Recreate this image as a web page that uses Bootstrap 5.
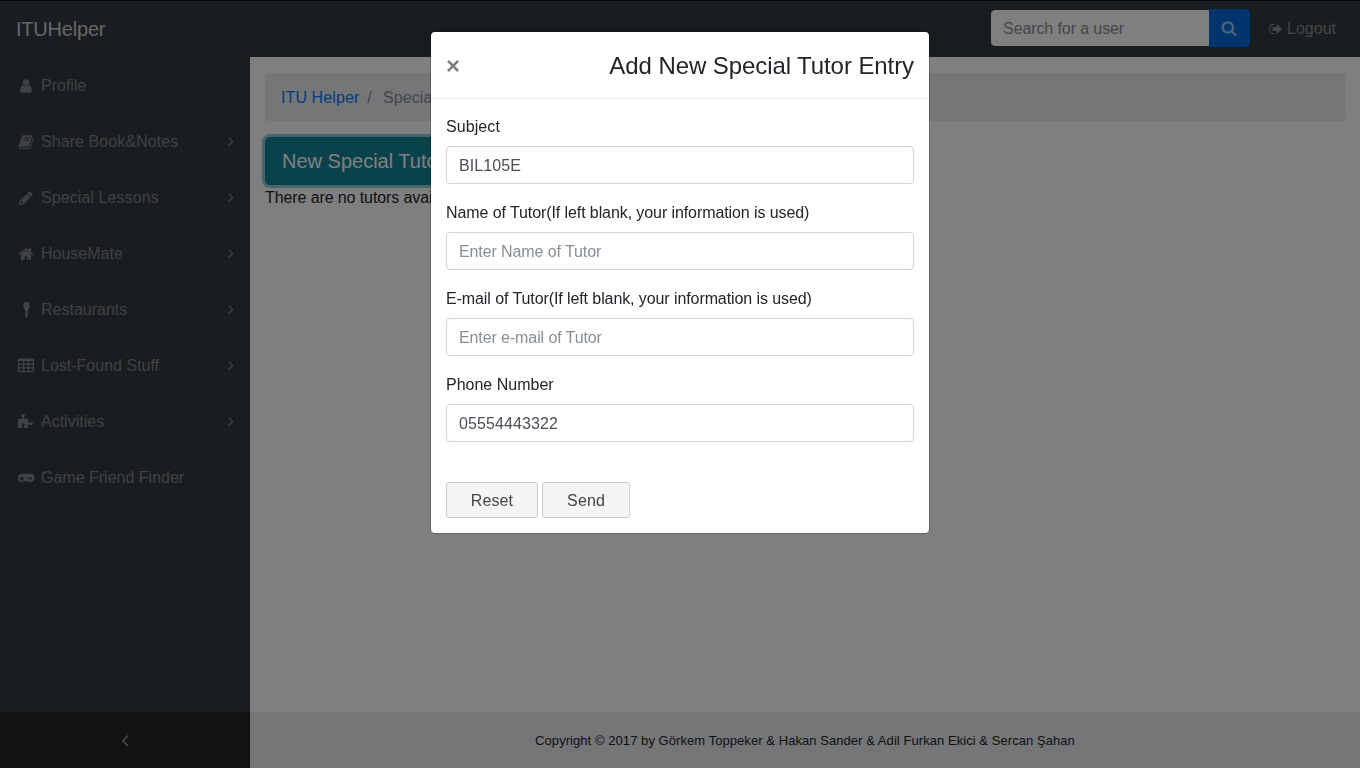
<!DOCTYPE html>
<html lang="en">
<head>
    <title>Special Tutor</title>
    <meta charset="utf-8">
    <meta name="viewport" content="width=device-width, initial-scale=1">
    <link href="https://cdn.jsdelivr.net/npm/bootstrap@5.3.3/dist/css/bootstrap.min.css" rel="stylesheet">
    <style>
        body { font-family: "Liberation Sans", Arial, sans-serif; font-size: 16px; color: #212529; height: 100vh; overflow: hidden; }
        .top-bar { background: #343a40; height: 57px; padding: 0 16px; border-top: 1px solid #111; flex-wrap: nowrap; }
        .top-bar .navbar-brand { font-size: 20px; letter-spacing: -.2px; color: rgba(255,255,255,.75); padding: 0; margin: 0; }
        .search-box { width: 259px; margin-right: 11px; margin-top: -2px; }
        .search-box .form-control { flex: 0 0 218px; width: 218px; background: #fff; border: 1px solid #fff; height: 36px; padding: 7px 11px 5px; font-size: 16px; letter-spacing: -.1px; border-radius: 4px 0 0 4px; }
        .search-box .form-control::placeholder { color: #868e96; opacity: 1; }
        .search-box .search-btn { flex: none; width: 42px; height: 38px; margin-left: 0; padding: 0; background: #0069d9; border: 1px solid #0069d9; border-radius: 0 4px 4px 0; display: flex; align-items: center; justify-content: center; }
        .search-btn svg { width: 16px; height: 16px; fill: #9cc8ef; }
        .logout-link { color: rgba(255,255,255,.42); text-decoration: none; padding: 0 8px; display: flex; align-items: center; gap: 4px; }
        .logout-link svg { width: 14px; height: 16px; fill: currentColor; }
        .page-row { height: 711px; }
        .side-col { width: 250px; flex: 0 0 250px; background: #343a40; }
        .side-link { height: 56px; padding: 2px 11px 0 18px; color: rgba(255,255,255,.38); text-decoration: none; display: flex; align-items: center; gap: 7px; }
        .side-link svg.ico { width: 16px; height: 16px; fill: currentColor; flex: none; }
        .side-link svg.arrow { width: 16px; height: 16px; fill: currentColor; flex: none; margin-left: auto; margin-top: -2px; }
        .wider-text { letter-spacing: .08px; }
        .side-toggle { height: 56px; background: #212529; display: flex; align-items: center; justify-content: center; color: rgba(255,255,255,.5); }
        .side-toggle svg { width: 20px; height: 20px; fill: currentColor; }
        .main-col { background: #fff; min-width: 0; }
        .main-inner { padding: 16px 15px; }
        .crumbs { background: #e9ecef; padding: 13px 16px 11px; border-radius: 4px; margin-bottom: 16px; height: 48px; flex-wrap: nowrap; letter-spacing: .1px; }
        .crumbs a { color: #007bff; text-decoration: none; }
        .crumbs .breadcrumb-item.active { color: #868e96; }
        .crumbs .breadcrumb-item + .breadcrumb-item::before { color: #868e96; padding-right: 11px; }
        .tutor-btn { background: #138496; border: 1px solid #117a8b; color: #fff; font-size: 20px; padding: 8px 16px; line-height: 30px; border-radius: 4.8px; box-shadow: 0 0 0 3px rgba(23,162,184,.5); white-space: nowrap; display: block; }
        .no-tutors { margin-top: 1px; letter-spacing: -.1px; }
        .foot-bar { height: 56px; padding-top: 2px; background: #e9ecef; font-size: 13px; letter-spacing: .06px; color: #212529; display: flex; align-items: center; justify-content: center; }
        .tutor-dialog { max-width: 500px; margin: 31px auto 0; }
        .tutor-dialog .modal-content { border: 1px solid rgba(0,0,0,.2); border-radius: 4.8px; }
        .tutor-dialog .modal-header { padding: 16px 15px 14px; border-bottom: 1px solid #e9ecef; height: 67px; }
        .tutor-dialog .modal-title { font-size: 24px; line-height: 36px; font-weight: 500; letter-spacing: -.08px; color: #212529; }
        .close-x { background: none; border: 0; padding: 0; margin: 0; font-size: 24px; line-height: 1; font-weight: 700; color: #000; opacity: .5; }
        .tutor-dialog .modal-body { padding: 15px; }
        .field-wrap { margin-bottom: 16px; }
        .field-wrap label { padding-top: 1px; margin-bottom: 7px; line-height: 24px; display: block; color: #212529; }
        .tight-label { letter-spacing: -.09px; }
        .field-wrap .form-control { height: 38px; padding: 7px 12px 5px; border: 1px solid #ced4da; border-radius: 4px; font-size: 16px; letter-spacing: .1px; color: #495057; }
        .field-wrap .form-control::placeholder { color: #868e96; opacity: 1; letter-spacing: -.1px; }
        .form-btns { margin-top: 40px; gap: 4px; }
        .plain-btn { height: 36px; width: 88px; background: #f5f5f5; border: 1px solid #ccc; border-radius: 3px; color: #444; font-size: 16px; letter-spacing: .1px; padding: 2px 0 0; line-height: 32px; }
        .plain-btn.reset-btn { width: 92px; }
    </style>
</head>
<body class="d-flex flex-column">
    <nav class="navbar top-bar d-flex align-items-center justify-content-between">
        <a class="navbar-brand" href="#">ITUHelper</a>
        <div class="d-flex align-items-center">
            <form class="input-group search-box align-items-center flex-nowrap">
                <input type="text" class="form-control" placeholder="Search for a user">
                <button type="button" class="search-btn">
                    <svg viewBox="0 0 1792 1792"><path d="M1216 832q0-185-131.500-316.500t-316.500-131.500-316.500 131.500-131.500 316.500 131.500 316.500 316.500 131.500 316.500-131.500 131.500-316.500zm512 832q0 52-38 90t-90 38q-54 0-90-38l-343-342q-179 124-399 124-143 0-273.500-55.500t-225-150-150-225-55.500-273.500 55.500-273.500 150-225 225-150 273.500-55.500 273.500 55.500 225 150 150 225 55.500 273.500q0 220-124 399l343 343q37 37 37 90z"/></svg>
                </button>
            </form>
            <a class="logout-link" href="#">
                <svg viewBox="0 0 1792 1792"><path d="M704 1440q0 4 1 20t.5 26.500-3 23.500-10 19.500-20.500 6.500h-320q-119 0-203.500-84.500t-84.500-203.500v-704q0-119 84.500-203.500t203.500-84.500h320q13 0 22.500 9.500t9.500 22.500q0 4 1 20t.5 26.500-3 23.500-10 19.500-20.500 6.500h-320q-66 0-113 47t-47 113v704q0 66 47 113t113 47h312l11.500 1 11.500 3 8 5.500 7 9 2 13.500zm928-544q0 26-19 45l-544 544q-19 19-45 19t-45-19-19-45v-288h-448q-26 0-45-19t-19-45v-384q0-26 19-45t45-19h448v-288q0-26 19-45t45-19 45 19l544 544q19 19 19 45z"/></svg>
                Logout
            </a>
        </div>
    </nav>

    <div class="d-flex page-row">
        <aside class="side-col d-flex flex-column">
            <a class="side-link" href="#">
                <svg class="ico" viewBox="0 0 1792 1792"><path d="M1536 1399q0 109-62.500 187t-150.500 78h-854q-88 0-150.500-78t-62.500-187q0-85 8.500-160.500t31.500-152 58.500-131 94-89 134.500-34.500q131 128 313 128t313-128q76 0 134.500 34.500t94 89 58.500 131 31.500 152 8.500 160.500zm-256-887q0 159-112.500 271.500t-271.500 112.500-271.500-112.500-112.500-271.500 112.500-271.500 271.500-112.500 271.500 112.500 112.500 271.500z"/></svg>
                Profile
            </a>
            <a class="side-link" href="#">
                <svg class="ico" viewBox="0 0 1792 1792"><path d="M1703 478q40 57 18 129l-275 906q-19 64-76.500 107.500t-122.500 43.500h-923q-77 0-148.500-53.500t-99.500-131.500q-24-67-2-127 0-4 3-27t4-37q1-8-3-21.500t-3-19.500q2-11 8-21t16.500-23.500 16.500-23.500q23-38 45-91.500t30-91.500q3-10 .5-30t-.5-28q3-11 17-28t17-23q21-36 42-92t25-90q1-9-2.500-32t.5-28q4-13 22-30.500t22-22.500q19-26 42.500-84.500t27.500-96.500q1-8-3-25.500t-2-26.500q2-8 9-18t18-23 17-21q8-12 16.500-30.500t15-35 16-36 19.500-32 26.500-23.500 36-11.500 47.500 5.500l-1 3q38-9 51-9h761q74 0 114 56t18 130l-274 906q-36 119-71.500 153.500t-128.500 34.500h-869q-27 0-38 15-11 16-1 43 24 70 144 70h923q29 0 56-15.500t35-41.500l300-987q7-22 5-57 38 15 59 43zm-1064 2q-4 13 2 22.500t20 9.500h608q13 0 25.500-9.500t16.500-22.500l21-64q4-13-2-22.500t-20-9.500h-608q-13 0-25.500 9.500t-16.500 22.500zm-83 256q-4 13 2 22.500t20 9.500h608q13 0 25.500-9.500t16.500-22.500l21-64q4-13-2-22.500t-20-9.500h-608q-13 0-25.500 9.500t-16.500 22.500z"/></svg>
                <span class="wider-text">Share Book&amp;Notes</span>
                <svg class="arrow" viewBox="0 0 1792 1792"><path d="M1171 960q0 13-10 23l-466 466q-10 10-23 10t-23-10l-50-50q-10-10-10-23t10-23l393-393-393-393q-10-10-10-23t10-23l50-50q10-10 23-10t23 10l466 466q10 10 10 23z"/></svg>
            </a>
            <a class="side-link" href="#">
                <svg class="ico" viewBox="0 0 1792 1792"><path d="M491 1536l91-91-235-235-91 91v107h128v128h107zm523-928q0-22-22-22-10 0-17 7l-542 542q-7 7-7 17 0 22 22 22 10 0 17-7l542-542q7-7 7-17zm-54-192l416 416-832 832h-416v-416zm683 96q0 53-37 90l-166 166-416-416 166-165q36-38 90-38 53 0 91 38l235 234q37 39 37 91z"/></svg>
                <span class="wider-text">Special Lessons</span>
                <svg class="arrow" viewBox="0 0 1792 1792"><path d="M1171 960q0 13-10 23l-466 466q-10 10-23 10t-23-10l-50-50q-10-10-10-23t10-23l393-393-393-393q-10-10-10-23t10-23l50-50q10-10 23-10t23 10l466 466q10 10 10 23z"/></svg>
            </a>
            <a class="side-link" href="#">
                <svg class="ico" viewBox="0 0 1792 1792"><path d="M1472 992v480q0 26-19 45t-45 19h-384v-384h-256v384h-384q-26 0-45-19t-19-45v-480q0-1 .5-3t.5-3l575-474 575 474q1 2 1 6zm223-69l-62 74q-8 9-21 11h-3q-13 0-21-7l-692-577-692 577q-12 8-24 7-13-2-21-11l-62-74q-8-10-7-23.500t11-21.500l719-599q32-26 76-26t76 26l244 204v-195q0-14 9-23t23-9h192q14 0 23 9t9 23v408l219 182q10 8 11 21.500t-7 23.500z"/></svg>
                HouseMate
                <svg class="arrow" viewBox="0 0 1792 1792"><path d="M1171 960q0 13-10 23l-466 466q-10 10-23 10t-23-10l-50-50q-10-10-10-23t10-23l393-393-393-393q-10-10-10-23t10-23l50-50q10-10 23-10t23 10l466 466q10 10 10 23z"/></svg>
            </a>
            <a class="side-link" href="#">
                <svg class="ico" viewBox="0 0 16 16"><ellipse cx="8.500" cy="3.800" rx="3.300" ry="4"/><rect x="7.300" y="6" width="2.400" height="9.500" rx="1.200"/></svg>
                Restaurants
                <svg class="arrow" viewBox="0 0 1792 1792"><path d="M1171 960q0 13-10 23l-466 466q-10 10-23 10t-23-10l-50-50q-10-10-10-23t10-23l393-393-393-393q-10-10-10-23t10-23l50-50q10-10 23-10t23 10l466 466q10 10 10 23z"/></svg>
            </a>
            <a class="side-link" href="#">
                <svg class="ico" viewBox="64 64 1664 1664"><path d="M576 1376v-192q0-14-9-23t-23-9h-320q-14 0-23 9t-9 23v192q0 14 9 23t23 9h320q14 0 23-9t9-23zm0-384v-192q0-14-9-23t-23-9h-320q-14 0-23 9t-9 23v192q0 14 9 23t23 9h320q14 0 23-9t9-23zm512 384v-192q0-14-9-23t-23-9h-320q-14 0-23 9t-9 23v192q0 14 9 23t23 9h320q14 0 23-9t9-23zm-512-768v-192q0-14-9-23t-23-9h-320q-14 0-23 9t-9 23v192q0 14 9 23t23 9h320q14 0 23-9t9-23zm512 384v-192q0-14-9-23t-23-9h-320q-14 0-23 9t-9 23v192q0 14 9 23t23 9h320q14 0 23-9t9-23zm512 384v-192q0-14-9-23t-23-9h-320q-14 0-23 9t-9 23v192q0 14 9 23t23 9h320q14 0 23-9t9-23zm-512-768v-192q0-14-9-23t-23-9h-320q-14 0-23 9t-9 23v192q0 14 9 23t23 9h320q14 0 23-9t9-23zm512 384v-192q0-14-9-23t-23-9h-320q-14 0-23 9t-9 23v192q0 14 9 23t23 9h320q14 0 23-9t9-23zm0-384v-192q0-14-9-23t-23-9h-320q-14 0-23 9t-9 23v192q0 14 9 23t23 9h320q14 0 23-9t9-23zm128-320v1088q0 66-47 113t-113 47h-1344q-66 0-113-47t-47-113v-1088q0-66 47-113t113-47h1344q66 0 113 47t47 113z"/></svg>
                Lost-Found Stuff
                <svg class="arrow" viewBox="0 0 1792 1792"><path d="M1171 960q0 13-10 23l-466 466q-10 10-23 10t-23-10l-50-50q-10-10-10-23t10-23l393-393-393-393q-10-10-10-23t10-23l50-50q10-10 23-10t23 10l466 466q10 10 10 23z"/></svg>
            </a>
            <a class="side-link" href="#">
                <svg class="ico" viewBox="0 0 1792 1792"><path d="M1664 1098q0 81-44.500 135t-123.500 54q-41 0-77.500-17.500t-59-38-56.500-38-71-17.500q-110 0-110 124 0 39 16 115t15 115v5q-22 0-33 1-34 3-97.500 11.500t-115.500 13.500-98 5q-61 0-103-26.500t-42-83.500q0-37 17.500-71t38-56.500 38-59 17.500-77.500q0-79-54-123.500t-135-44.500q-84 0-143 45.500t-59 127.500q0 43 15 83t33.500 64.500 33.500 53 15 50.500q0 45-46 89-37 35-117 35-95 0-245-24-9-2-27.500-4t-27.500-4l-13-2q-1 0-3-1-2 0-2-1v-1024q2 1 17.500 3.500t34 5 21.500 3.500q150 24 245 24 80 0 117-35 46-44 46-89 0-22-15-50.500t-33.500-53-33.500-64.500-15-83q0-82 59-127.500t144-45.500q80 0 134 44.500t54 123.500q0 41-17.500 77.500t-38 59-38 56.500-17.500 71q0 57 42 83.500t103 26.500q64 0 180-15t163-17v2q-1 2-3.500 17.500t-5 34-3.500 21.500q-24 150-24 245 0 80 35 117 44 46 89 46 22 0 50.500-15t53-33.500 64.500-33.500 83-15q82 0 127.500 59t45.500 143z"/></svg>
                Activities
                <svg class="arrow" viewBox="0 0 1792 1792"><path d="M1171 960q0 13-10 23l-466 466q-10 10-23 10t-23-10l-50-50q-10-10-10-23t10-23l393-393-393-393q-10-10-10-23t10-23l50-50q10-10 23-10t23 10l466 466q10 10 10 23z"/></svg>
            </a>
            <a class="side-link" href="#">
                <svg class="ico" viewBox="0 0 16 16" style="overflow:visible"><path fill-rule="evenodd" d="M4 3.800h8.500a4.200 4.200 0 0 1 0 8.400c-1.800 0-2.500-1.300-4.200-1.300s-2.500 1.300-4.300 1.300a4.200 4.200 0 0 1 0-8.400zM3.200 6.800v1.200h-1.200v1.500h1.200v1.200h1.500v-1.200h1.200v-1.500h-1.200v-1.200zM11.500 8a1 1 0 1 0 0 .1zM14 8.500a1 1 0 1 0 0 .1z"/></svg>
                Game Friend Finder
            </a>
            <div class="side-toggle mt-auto">
                <svg viewBox="0 0 1792 1792"><path d="M1203 544q0 13-10 23l-393 393 393 393q10 10 10 23t-10 23l-50 50q-10 10-23 10t-23-10l-466-466q-10-10-10-23t10-23l466-466q10-10 23-10t23 10l50 50q10 10 10 23z"/></svg>
            </div>
        </aside>

        <main class="main-col flex-grow-1 d-flex flex-column">
            <div class="main-inner flex-grow-1">
                <ol class="breadcrumb crumbs">
                    <li class="breadcrumb-item"><a href="#">ITU Helper</a></li>
                    <li class="breadcrumb-item active">Special Tutor</li>
                </ol>
                <button type="button" class="btn tutor-btn">New Special Tutor Entry</button>
                <div class="no-tutors">There are no tutors available</div>
            </div>
            <footer class="foot-bar">Copyright © 2017 by Görkem Toppeker &amp; Hakan Sander &amp; Adil Furkan Ekici &amp; Sercan Şahan</footer>
        </main>
    </div>

    <div class="modal-backdrop fade show"></div>
    <div class="modal fade show d-block" tabindex="-1">
        <div class="modal-dialog tutor-dialog">
            <div class="modal-content">
                <div class="modal-header justify-content-between">
                    <button type="button" class="close-x">×</button>
                    <h4 class="modal-title">Add New Special Tutor Entry</h4>
                </div>
                <div class="modal-body">
                    <form>
                        <div class="field-wrap">
                            <label for="subject" class="wider-text">Subject</label>
                            <input type="text" class="form-control" id="subject" value="BIL105E">
                        </div>
                        <div class="field-wrap">
                            <label for="tutor" class="tight-label">Name of Tutor(If left blank, your information is used)</label>
                            <input type="text" class="form-control" id="tutor" placeholder="Enter Name of Tutor">
                        </div>
                        <div class="field-wrap">
                            <label for="mail" class="tight-label">E-mail of Tutor(If left blank, your information is used)</label>
                            <input type="email" class="form-control" id="mail" placeholder="Enter e-mail of Tutor">
                        </div>
                        <div class="field-wrap mb-0">
                            <label for="phone">Phone Number</label>
                            <input type="text" class="form-control" id="phone" value="05554443322">
                        </div>
                        <div class="d-flex form-btns">
                            <button type="reset" class="plain-btn reset-btn">Reset</button>
                            <button type="button" class="plain-btn">Send</button>
                        </div>
                    </form>
                </div>
            </div>
        </div>
    </div>
    <script src="https://cdn.jsdelivr.net/npm/bootstrap@5.3.3/dist/js/bootstrap.bundle.min.js"></script>
</body>
</html>
